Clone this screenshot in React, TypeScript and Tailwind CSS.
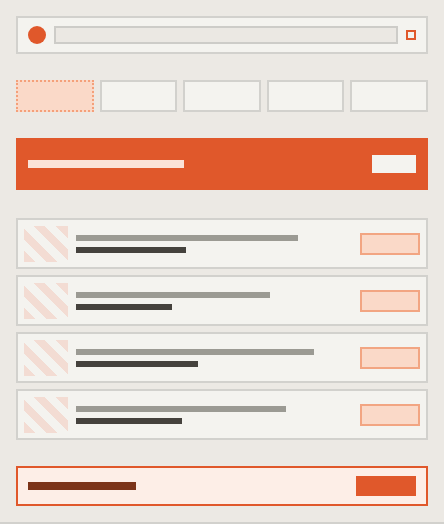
import React from "react";

const cards = [
  { g: 222, d: 110 },
  { g: 194, d: 96 },
  { g: 238, d: 122 },
  { g: 210, d: 106 },
];

export default function App() {
  return (
    <div className="w-[444px] h-[524px] bg-[#ece9e4] border-b-2 border-[#d2d1cd] px-4 pt-4 flex flex-col" style={{ fontFamily: "'Liberation Sans', sans-serif" }}>
      {/* top bar */}
      <div className="h-[38px] border-2 border-[#d2d1cd] bg-[#f4f3ef] flex items-center px-[10px] gap-2">
        <div className="w-[18px] h-[18px] rounded-full bg-[#e0582b] shrink-0" />
        <div className="flex-1 h-[18px] border-2 border-[#cdccc8] bg-[#ebe8e3]" />
        <div className="w-[10px] h-[10px] border-2 border-[#e0582b] bg-[#f4f3ef] shrink-0" />
      </div>

      {/* tabs */}
      <div className="mt-[26px] flex gap-[6px] h-[32px]">
        <div className="flex-1 border-2 border-dotted border-[#f4a07a] bg-[#fad9c8]" />
        <div className="flex-1 border-2 border-[#d2d1cd] bg-[#f4f3ef]" />
        <div className="flex-1 border-2 border-[#d2d1cd] bg-[#f4f3ef]" />
        <div className="flex-1 border-2 border-[#d2d1cd] bg-[#f4f3ef]" />
        <div className="flex-1 border-2 border-[#d2d1cd] bg-[#f4f3ef]" />
      </div>

      {/* banner */}
      <div className="mt-[26px] h-[52px] bg-[#e0582b] flex items-center justify-between px-3">
        <div className="w-[156px] h-[8px] bg-[#fbe3d8]" />
        <div className="w-[44px] h-[18px] bg-[#f4f3ef]" />
      </div>

      {/* list */}
      <div className="mt-[28px] flex flex-col gap-[6px]">
        {cards.map((c, i) => (
          <div key={i} className="h-[51px] border-2 border-[#d2d1cd] bg-[#f4f3ef] flex items-center px-[6px]">
            <div className="w-[44px] h-[36px] shrink-0 bg-[repeating-linear-gradient(45deg,#f3dcd3_0px,#f3dcd3_8px,#f4f3ef_8px,#f4f3ef_16px)]" />
            <div className="ml-2 flex flex-col gap-[6px] flex-1">
              <div className="h-[6px] bg-[#9b9a93]" style={{ width: c.g }} />
              <div className="h-[6px] bg-[#45423d]" style={{ width: c.d }} />
            </div>
            <div className="w-[60px] h-[22px] border-2 border-[#f2a582] bg-[#fad9c8] shrink-0" />
          </div>
        ))}
      </div>

      {/* bottom */}
      <div className="mt-[26px] h-[40px] border-2 border-[#e0582b] bg-[#fdeee7] flex items-center justify-between px-[10px]">
        <div className="w-[108px] h-[8px] bg-[#7b3319]" />
        <div className="w-[60px] h-[20px] bg-[#e0582b]" />
      </div>
    </div>
  );
}
